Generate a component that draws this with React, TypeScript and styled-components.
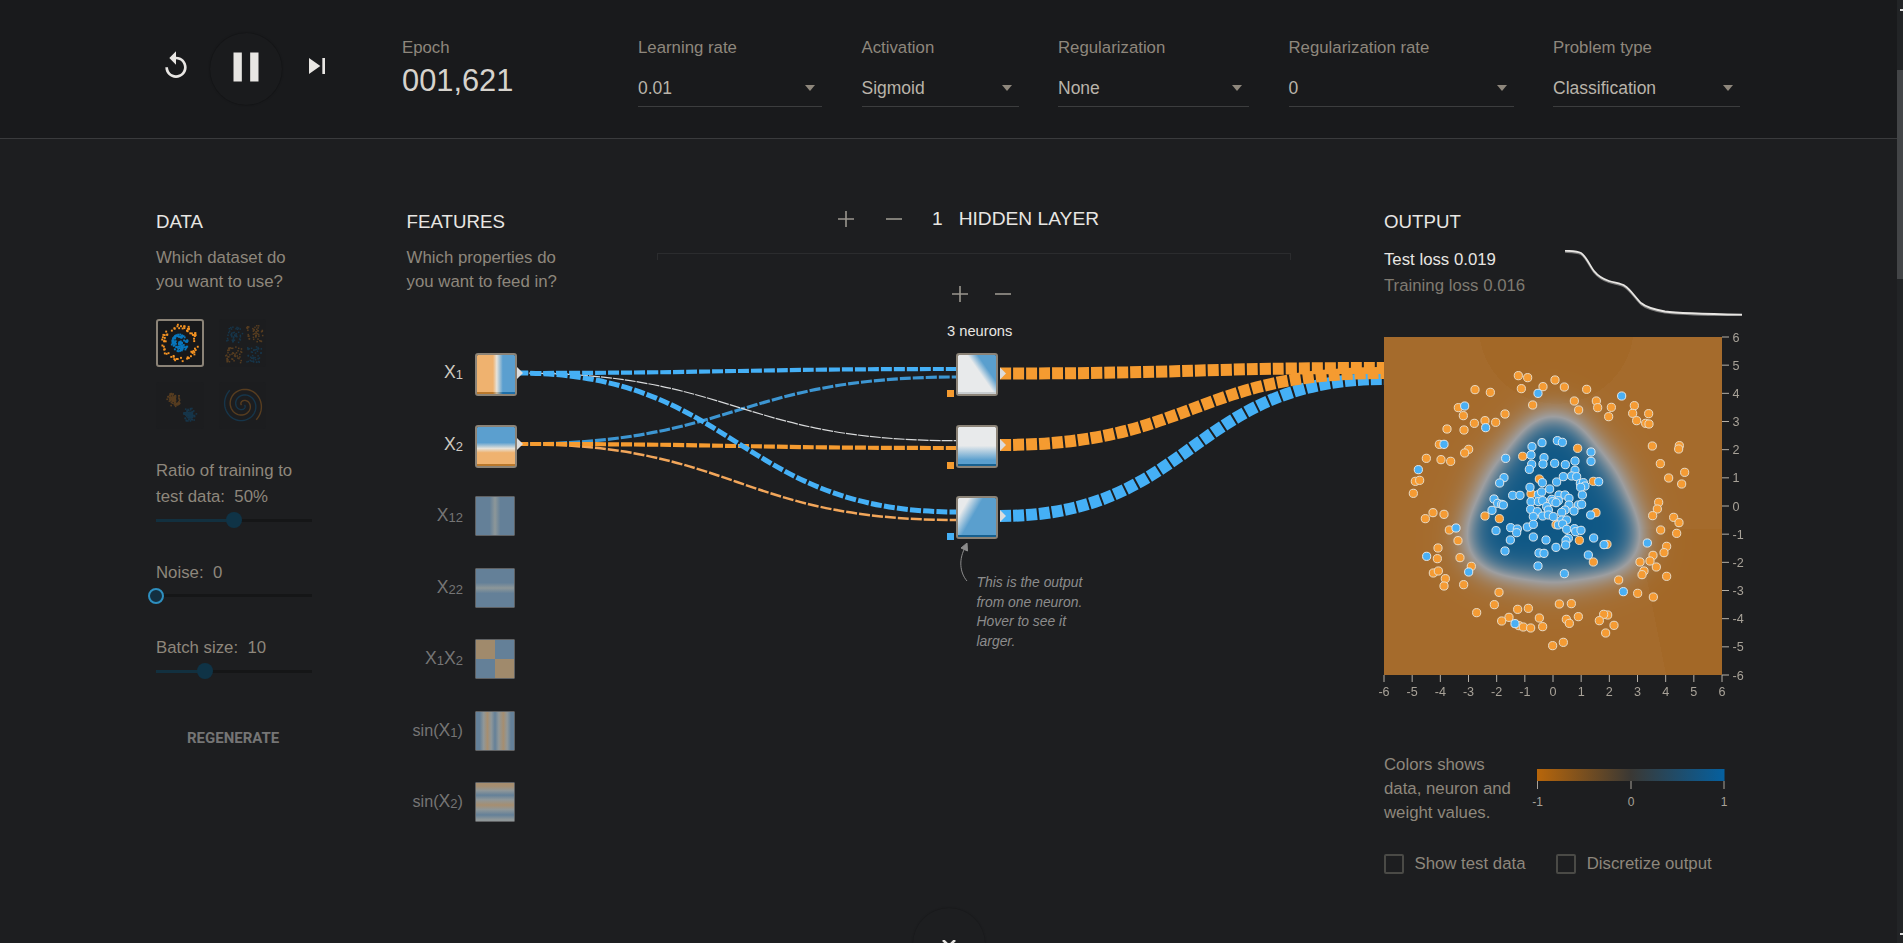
import { useEffect, useRef } from "react";
import styled, { createGlobalStyle } from "styled-components";

const GlobalStyle = createGlobalStyle`
  html, body {
    margin: 0;
    padding: 0;
    background: #fff;
    overflow: hidden;
  }
  body {
    font-family: "Liberation Sans", Arial, sans-serif;
  }
`;

const Shell = styled.div`
  display: flex;
  height: 943px;
  overflow: hidden;
  background: #1d1e20;
`;

const Content = styled.div`
  flex: 1;
  position: relative;
  overflow: hidden;
`;

const Scrollbar = styled.div`
  width: 6px;
  background: #222426;
  position: relative;
  &::before,
  &::after {
    content: "";
    position: absolute;
    right: 0;
    width: 3px;
    height: 2px;
    background: #ddd;
  }
  &::before {
    top: 9px;
  }
  &::after {
    top: 933px;
  }
`;

const ScrollThumb = styled.div`
  margin-top: 70px;
  height: 209px;
  background: #434547;
`;

const TopBar = styled.header`
  display: flex;
  height: 138px;
  padding-left: 160px;
  background: #191a1c;
  border-bottom: 1px solid #3a3b3d;
`;

const Transport = styled.div`
  display: flex;
  align-items: center;
  height: 72px;
  margin-top: 33px;
`;

const IconButton = styled.button`
  display: flex;
  padding: 0;
  border: 0;
  background: none;
  color: #e8e6e3;
  margin-top: -6px;
`;

const PlayButton = styled.button`
  width: 72px;
  height: 72px;
  margin: 0 19px 0 18px;
  padding: 0;
  display: flex;
  align-items: center;
  justify-content: center;
  border-radius: 50%;
  border: 0;
  background: #1a1b1d;
  box-shadow: 0 0 2px rgba(0, 0, 0, 0.5);
  color: #e8e6e3;
  svg {
    margin-top: -5px;
  }
`;

const EpochBlock = styled.div`
  width: 236px;
  margin-left: 69px;
  padding-top: 38px;
`;

const ControlLabel = styled.div`
  font-size: 16.8px;
  line-height: 20px;
  color: #8e877c;
`;

const EpochValue = styled.div`
  margin-top: 5.5px;
  font-size: 30.8px;
  line-height: 34px;
  color: #d6d3cd;
`;

const Controls = styled.div`
  display: flex;
  gap: 39.5px;
  padding-top: 38px;
`;

const Field = styled.div<{ $width: number }>`
  width: ${(p) => p.$width}px;
`;

const Select = styled.div`
  position: relative;
  margin-top: 13px;
  height: 35px;
  line-height: 34px;
  font-size: 17.5px;
  color: #b9b4aa;
  border-bottom: 1px solid #3c3d3e;
  &::after {
    content: "";
    position: absolute;
    right: 7px;
    top: 14px;
    border-left: 5px solid transparent;
    border-right: 5px solid transparent;
    border-top: 6px solid #8e877c;
  }
`;

const Main = styled.main`
  position: relative;
  display: flex;
  height: 804px;
  padding-left: 156px;
`;

const LinkLayer = styled.svg`
  position: absolute;
  left: 0;
  top: 0;
  z-index: 0;
`;

const Column = styled.section<{ $width: number; $top?: number; $gap?: number }>`
  position: relative;
  z-index: 1;
  width: ${(p) => p.$width}px;
  margin-left: ${(p) => p.$gap ?? 0}px;
  padding-top: ${(p) => p.$top ?? 71}px;
`;

const Heading = styled.h4`
  margin: 0;
  font-size: 18.7px;
  font-weight: 400;
  line-height: 24px;
  color: #e8e6e3;
`;

const Lead = styled.p`
  margin: 12px 0 0;
  font-size: 16.8px;
  line-height: 24px;
  color: #8e877c;
`;

const DatasetGrid = styled.div`
  display: grid;
  grid-template-columns: 47.6px 47.6px;
  grid-auto-rows: 47.6px;
  gap: 15px;
  margin-top: 25px;
`;

const Dataset = styled.div<{ $active?: boolean }>`
  box-sizing: border-box;
  border-radius: 3px;
  border: 2px solid ${(p) => (p.$active ? "#8b8377" : "transparent")};
  background: ${(p) => (p.$active ? "#17181a" : "#1c1d1f")};
  svg {
    display: block;
    opacity: ${(p) => (p.$active ? 1 : 0.27)};
  }
`;

const SliderLabel = styled.div<{ $top: number }>`
  margin-top: ${(p) => p.$top}px;
  font-size: 16.8px;
  line-height: 25.7px;
  color: #8e877c;
`;

const SliderTrack = styled.div`
  position: relative;
  width: 156px;
  height: 3px;
  margin: 9px 0;
  background: #151617;
`;

const SliderFill = styled.div<{ $pct: number }>`
  width: ${(p) => p.$pct}%;
  height: 100%;
  background: #12303f;
`;

const SliderThumb = styled.div<{ $pct: number; $empty?: boolean }>`
  position: absolute;
  left: ${(p) => p.$pct}%;
  top: 50%;
  box-sizing: border-box;
  width: 16px;
  height: 16px;
  margin: -8px 0 0 -8px;
  border-radius: 50%;
  background: ${(p) => (p.$empty ? "#132f40" : "#0f3346")};
  border: ${(p) => (p.$empty ? "2px solid #2e8fbf" : "0")};
`;

const Regenerate = styled.div`
  margin: 55px 0 0 31px;
  font-family: Roboto, "Liberation Sans", sans-serif;
  font-weight: 700;
  font-size: 15px;
  line-height: 20px;
  color: #757575;
`;

const FeatureList = styled.div`
  margin-top: 59px;
`;

const FeatureRow = styled.div`
  display: flex;
  height: 71.5px;
  align-items: flex-start;
`;

const FeatureLabel = styled.div<{ $active?: boolean }>`
  width: 56.4px;
  margin-right: 12px;
  height: 40px;
  line-height: 38px;
  text-align: right;
  white-space: nowrap;
  font-size: 16.2px;
  color: ${(p) => (p.$active ? "#cfcac2" : "#757575")};
  b {
    font-weight: 400;
    font-size: 17.6px;
  }
  i {
    font-style: normal;
    font-size: 13px;
    position: relative;
    top: 1px;
  }
`;

const FeatureNode = styled.div<{ $bg: string; $active?: boolean }>`
  position: relative;
  box-sizing: border-box;
  width: ${(p) => (p.$active ? 42 : 40)}px;
  height: ${(p) => (p.$active ? 43 : 40)}px;
  border-radius: ${(p) => (p.$active ? 3 : 1)}px;
  border: ${(p) => (p.$active ? "2px solid #8b8377" : "1px solid #5f6163")};
  background: ${(p) => p.$bg};
  background-clip: padding-box;
`;

const EdgeStripe = styled.div<{ $bg: string }>`
  position: absolute;
  left: 0;
  right: 0;
  bottom: 0;
  height: 2px;
  background: ${(p) => p.$bg};
`;

const LayerHeader = styled.div`
  display: flex;
  align-items: center;
  gap: 32px;
  height: 36px;
  padding-left: 181px;
  font-size: 19.2px;
  color: #e8e6e3;
`;

const RoundButton = styled.button`
  display: flex;
  padding: 0;
  border: 0;
  background: none;
  color: #9a968e;
`;

const LayerTitle = styled.span`
  margin-left: -2px;
  white-space: pre;
`;

const Bracket = styled.div`
  height: 6px;
  margin-top: 16px;
  border: 1px solid #2b2c2e;
  border-bottom: 0;
`;

const NeuronControls = styled.div`
  display: flex;
  gap: 27px;
  height: 26px;
  align-items: center;
  margin-top: 21px;
  padding-left: 295px;
`;

const NeuronCount = styled.div`
  margin-top: 13px;
  padding-left: 290px;
  font-size: 14.7px;
  line-height: 22px;
  color: #e8e6e3;
`;

const NeuronList = styled.div`
  display: flex;
  flex-direction: column;
  margin-top: 11px;
  padding-left: 299.5px;
`;

const Neuron = styled.div<{ $bg: string }>`
  position: relative;
  box-sizing: border-box;
  width: 42px;
  height: 43px;
  margin-bottom: 28.5px;
  border-radius: 3px;
  border: 2px solid #8b8377;
  background: ${(p) => p.$bg};
  background-clip: padding-box;
`;

const Bias = styled.div<{ $color: string }>`
  position: absolute;
  left: -11.5px;
  top: 35px;
  width: 7px;
  height: 7px;
  background: ${(p) => p.$color};
`;

const Note = styled.div`
  position: relative;
  margin: 5.5px 0 0 20px;
  width: 110px;
  font-size: 13.9px;
  font-style: italic;
  line-height: 19.6px;
  color: #8c8c8c;
  svg {
    position: absolute;
    left: -19px;
    top: -30px;
  }
`;

const Metrics = styled.div`
  display: flex;
  justify-content: space-between;
  margin-top: 13px;
  height: 70px;
  svg {
    margin-top: 3px;
  }
`;

const LossText = styled.div<{ $active?: boolean }>`
  font-size: 16.8px;
  line-height: 26px;
  color: ${(p) => (p.$active ? "#e8e6e3" : "#7f7a71")};
`;

const Heat = styled.div`
  position: relative;
  width: 338px;
  height: 338px;
  margin-top: 20px;
  canvas {
    display: block;
  }
  svg {
    position: absolute;
    left: 0;
    top: 0;
    overflow: visible;
  }
`;

const Legend = styled.div`
  display: flex;
  margin-top: 78px;
`;

const LegendText = styled.div`
  width: 152.7px;
  font-size: 16.8px;
  line-height: 24px;
  color: #8e877c;
`;

const LegendScale = styled.svg`
  margin-top: 16px;
  overflow: visible;
`;

const Options = styled.div`
  display: flex;
  margin-top: 29px;
`;

const Option = styled.label<{ $width: number }>`
  display: flex;
  align-items: center;
  gap: 10.5px;
  width: ${(p) => p.$width}px;
  font-size: 16.8px;
  line-height: 20px;
  color: #8e877c;
`;

const Checkbox = styled.span`
  box-sizing: border-box;
  width: 20px;
  height: 20px;
  border: 2px solid #4a4a46;
  border-radius: 2px;
`;

const ScrollHint = styled.div`
  position: absolute;
  left: 913px;
  top: 908px;
  width: 72px;
  height: 72px;
  border-radius: 50%;
  background: #1d1e20;
  box-shadow: 0 0 2px rgba(0, 0, 0, 0.35);
  z-index: 2;
  color: #e8e6e3;
  display: flex;
  justify-content: center;
  padding-top: 32px;
  box-sizing: border-box;
`;

const BLUE = "#45b0f6";
const ORANGE = "#f59b30";

const curve = (x0: number, y0: number, x1: number, y1: number) => {
  const xm = (x0 + x1) / 2;
  return `M${x0},${y0} C${xm},${y0} ${xm},${y1} ${x1},${y1}`;
};

const LINKS = [
  { d: curve(1000, 516, 1384, 379), color: BLUE, width: 12, dash: "11,2" },
  { d: curve(1000, 445, 1384, 373), color: ORANGE, width: 12, dash: "11,2" },
  { d: curve(1000, 373.5, 1384, 368), color: ORANGE, width: 12, dash: "11,2" },
  { d: curve(517, 444, 957, 520), color: "#f2a65a", width: 2.5, dash: "11,2" },
  { d: curve(517, 444, 957, 377), color: "#3d96d2", width: 3.2, dash: "11,2" },
  { d: curve(517, 373, 957, 440.7), color: "#d8dadb", width: 1.2, dash: "11,1" },
  { d: curve(517, 444, 957, 448), color: ORANGE, width: 4.2, dash: "11,2" },
  { d: curve(517, 373, 957, 369), color: BLUE, width: 4.2, dash: "11,2" },
  { d: curve(517, 373, 957, 512), color: BLUE, width: 5, dash: "11,2.2" },
];

const ARROWS = [
  [517, 373],
  [517, 444],
  [1000, 373.5],
  [1000, 445],
  [1000, 516],
];

const FEATURES = [
  {
    key: "x1",
    label: (
      <>
        <b>X</b>
        <i>1</i>
      </>
    ),
    active: true,
    bg: "linear-gradient(90deg, #efb26f 42%, #e6e2da 52%, #5b9fcf 68%)",
    edge: "linear-gradient(90deg, #b9782c 42%, #c9b9a0 52%, #1d6ea8 68%)",
  },
  {
    key: "x2",
    label: (
      <>
        <b>X</b>
        <i>2</i>
      </>
    ),
    active: true,
    bg: "linear-gradient(180deg, #5b9fcf 40%, #e6e2da 55%, #efb26f 66%)",
    edge: "#b9782c",
  },
  {
    key: "x12",
    label: (
      <>
        <b>X</b>
        <i>12</i>
      </>
    ),
    bg: "linear-gradient(90deg, #648098 36%, #8d9799 50%, #648098 64%)",
  },
  {
    key: "x22",
    label: (
      <>
        <b>X</b>
        <i>22</i>
      </>
    ),
    bg: "linear-gradient(180deg, #648098 36%, #8d9799 50%, #648098 64%)",
  },
  {
    key: "x1x2",
    label: (
      <>
        <b>X</b>
        <i>1</i>
        <b>X</b>
        <i>2</i>
      </>
    ),
    bg: "conic-gradient(#648098 0 25%, #a08a6c 25% 50%, #648098 50% 75%, #a08a6c 75%)",
  },
  {
    key: "sinx1",
    label: (
      <>
        sin(<b>X</b>
        <i>1</i>)
      </>
    ),
    bg: "linear-gradient(90deg, #648098 10%, #8f9799 20%, #a68e70 30%, #8f9799 40%, #648098 50%, #8f9799 60%, #a68e70 72%, #8f9799 82%, #648098 92%)",
  },
  {
    key: "sinx2",
    label: (
      <>
        sin(<b>X</b>
        <i>2</i>)
      </>
    ),
    bg: "linear-gradient(180deg, #a68e70 8%, #8f9799 20%, #648098 32%, #8f9799 44%, #a68e70 58%, #8f9799 70%, #648098 84%, #8f9799 96%)",
  },
];

const NEURONS = [
  { bg: "linear-gradient(55deg, #e8eaeb 56%, #5a9fce 72%)", bias: ORANGE, edge: "#c8cdd0" },
  { bg: "linear-gradient(180deg, #e8eaeb 48%, #5a9fce 85%)", bias: ORANGE, edge: "#17608f" },
  { bg: "linear-gradient(120deg, #e8eaeb 18%, #5a9fce 42%)", bias: BLUE, edge: "#17608f" },
];

// dot positions read off the plot, top half and bottom half
const ORANGE_TOP = [
  [445, 527], [473, 533], [555, 540], [519, 560], [583, 561], [454, 566], [650, 568], [315, 569], [361, 577],
  [613, 603], [679, 603], [488, 615], [683, 623], [724, 622], [793, 617], [265, 623], [626, 630], [280, 647],
  [405, 642], [788, 640], [836, 641], [716, 650], [345, 662], [313, 670], [377, 667], [800, 662], [827, 670],
  [837, 672], [231, 687], [282, 690], [847, 738], [928, 737], [926, 747], [208, 733], [296, 748], [284, 759],
  [623, 745], [458, 769], [169, 775], [213, 779], [242, 784], [871, 791],
];
const BLUE_TOP = [
  [284, 618], [504, 580], [755, 588], [347, 683], [222, 733], [562, 722], [577, 727], [516, 728], [486, 740],
  [663, 756], [483, 765], [407, 775], [522, 773], [615, 783], [663, 784], [145, 809], [485, 793], [519, 792],
  [554, 790], [586, 794], [478, 808], [615, 811],
];
const ORANGE_BOTTOM = [
  [944, 67], [896, 84], [136, 94], [149, 91], [935, 102], [130, 130], [508, 87], [670, 94], [483, 131], [866, 157],
  [862, 177], [189, 188], [222, 193], [678, 188], [848, 197], [166, 206], [345, 198], [388, 206], [911, 202],
  [927, 218], [558, 224], [238, 240], [872, 240], [920, 250], [264, 272], [628, 271], [711, 283], [890, 289],
  [204, 294], [882, 308], [849, 316], [202, 326], [270, 323], [840, 333], [810, 336], [670, 336], [304, 349],
  [859, 351], [190, 369], [205, 363], [822, 363], [816, 374], [890, 379], [226, 386], [746, 390], [222, 408],
  [281, 404], [803, 430], [850, 441], [387, 427], [568, 462], [604, 461], [373, 464], [475, 475], [443, 478],
  [320, 488], [713, 495], [701, 493], [625, 500], [508, 504], [417, 502], [589, 508], [688, 512], [395, 513],
  [598, 520], [732, 526], [447, 527], [460, 531], [482, 534], [518, 530], [707, 549], [580, 577], [548, 587],
];
const BLUE_BOTTOM = [
  [402, 83], [389, 99], [517, 98], [560, 96], [580, 80], [605, 78], [620, 80], [631, 100], [640, 98], [686, 95],
  [645, 108], [632, 112], [480, 112], [539, 117], [637, 135], [428, 136], [450, 136], [505, 134], [515, 126],
  [372, 147], [383, 160], [395, 163], [400, 165], [483, 155], [505, 155], [518, 152], [545, 148], [567, 135],
  [585, 135], [597, 145], [548, 155], [565, 152], [558, 158], [597, 165], [625, 165], [635, 163], [366, 181],
  [482, 178], [502, 185], [530, 170], [535, 180], [585, 180], [612, 183], [575, 187], [662, 195], [490, 200],
  [518, 198], [535, 195], [550, 200], [575, 210], [590, 210], [472, 231], [490, 223], [422, 233], [442, 237],
  [440, 248], [378, 242], [565, 225], [578, 222], [590, 238], [613, 236], [617, 245], [633, 241], [490, 261],
  [421, 270], [528, 270], [595, 265], [588, 272], [587, 285], [671, 264], [405, 303], [558, 292], [507, 309],
  [522, 310], [702, 284], [655, 315], [832, 279], [258, 234], [170, 319], [296, 366], [504, 348], [583, 371],
  [760, 425], [435, 521],
];

const toPlot = (list: number[][], dy: number) => list.map(([x, y]) => [x / 3 - 14, y / 3 + dy]);
const ORANGE_DOTS = [...toPlot(ORANGE_TOP, -137), ...toPlot(ORANGE_BOTTOM, 113)];
const BLUE_DOTS = [...toPlot(BLUE_TOP, -137), ...toPlot(BLUE_BOTTOM, 113)];

const TICKS = [-6, -5, -4, -3, -2, -1, 0, 1, 2, 3, 4, 5, 6];
const STEP = 338 / 12;

// rounded triangle: radius of the white band around the origin, in data units
const ringRadius = (a: number) =>
  2.88 + 0.35 * Math.cos(3 * (a - Math.PI / 2)) + 0.06 * Math.cos(6 * (a - Math.PI / 2)) - 0.1 * Math.sin(a);

const heatValue = (x: number, y: number) => {
  const d = ringRadius(Math.atan2(y, x)) - Math.hypot(x, y);
  return Math.tanh(1.6 * d);
};

const mix = (a: number[], b: number[], t: number) => a.map((v, i) => v + (b[i] - v) * t);

function HeatCanvas() {
  const ref = useRef<HTMLCanvasElement>(null);
  useEffect(() => {
    const ctx = ref.current?.getContext("2d");
    if (!ctx) return;
    const image = ctx.createImageData(338, 338);
    const white = [157, 158, 160];
    const blue = [14, 87, 133];
    for (let py = 0; py < 338; py++) {
      for (let px = 0; px < 338; px++) {
        const x = px / STEP - 6;
        const y = 6 - py / STEP;
        const v = heatValue(x, y);
        // the far field is not flat in the reference, a few darker wedges
        const dark = Math.hypot(x - 0.1, y - 6.4) < 2.75 || (x > 3 && y < -0.8 && x - 3 > (y + 1) * -0.2);
        const orange = dark ? [163, 104, 39] : [165, 107, 44];
        const c = v < 0 ? mix(white, orange, -v) : mix(white, blue, v);
        const i = (py * 338 + px) * 4;
        image.data[i] = c[0];
        image.data[i + 1] = c[1];
        image.data[i + 2] = c[2];
        image.data[i + 3] = 255;
      }
    }
    ctx.putImageData(image, 0, 0);
  }, []);
  return <canvas ref={ref} width={338} height={338} />;
}

const seeded = (seed: number) => () => {
  seed = (seed + 0x6d2b79f5) | 0;
  let t = Math.imul(seed ^ (seed >>> 15), 1 | seed);
  t = (t + Math.imul(t ^ (t >>> 7), 61 | t)) ^ t;
  return ((t ^ (t >>> 14)) >>> 0) / 4294967296;
};

type Dot = { x: number; y: number; c: string };
const THUMB_BLUE = "#0877bd";
const THUMB_ORANGE = "#f59322";

const circleDots = (): Dot[] => {
  const r = seeded(7);
  const out: Dot[] = [];
  for (let i = 0; i < 85; i++) {
    const a = r() * Math.PI * 2;
    const rad = Math.sqrt(r()) * 8.5;
    out.push({ x: 21 + Math.cos(a) * rad, y: 21 + Math.sin(a) * rad, c: THUMB_BLUE });
  }
  for (let i = 0; i < 70; i++) {
    const a = r() * Math.PI * 2;
    const rad = 14 + r() * 4.5;
    out.push({ x: 21 + Math.cos(a) * rad, y: 21 + Math.sin(a) * rad, c: THUMB_ORANGE });
  }
  return out;
};

const xorDots = (): Dot[] => {
  const r = seeded(11);
  const out: Dot[] = [];
  const quadrants: [number, number, string][] = [
    [5, 5, THUMB_BLUE],
    [25, 4, THUMB_ORANGE],
    [4, 25, THUMB_ORANGE],
    [25, 25, THUMB_BLUE],
  ];
  quadrants.forEach(([ox, oy, c]) => {
    for (let i = 0; i < 45; i++) {
      out.push({ x: ox + r() * 16, y: oy + r() * 16, c });
    }
  });
  return out;
};

const gaussDots = (): Dot[] => {
  const r = seeded(23);
  const out: Dot[] = [];
  const blob = (cx: number, cy: number, c: string) => {
    for (let i = 0; i < 90; i++) {
      const a = r() * Math.PI * 2;
      const rad = r() * 7;
      out.push({ x: cx + Math.cos(a) * rad, y: cy + Math.sin(a) * rad, c });
    }
  };
  blob(15, 15, THUMB_ORANGE);
  blob(31, 30, THUMB_BLUE);
  return out;
};

const spiralPath = (turn: number) => {
  const pts: string[] = [];
  for (let t = 0; t <= 1; t += 0.01) {
    const a = t * Math.PI * 3.3 + turn;
    const rad = 1.5 + t * 18.5;
    pts.push(`${(22 + Math.cos(a) * rad).toFixed(2)},${(21 + Math.sin(a) * rad).toFixed(2)}`);
  }
  return `M${pts.join(" L")}`;
};

function DotThumb({ dots, size, dot }: { dots: Dot[]; size: number; dot: number }) {
  return (
    <svg width={size} height={size} viewBox={`0 0 ${size} ${size}`}>
      {dots.map((d, i) => (
        <rect key={i} x={d.x} y={d.y} width={dot} height={dot} fill={d.c} />
      ))}
    </svg>
  );
}

function Slider({ pct, empty }: { pct: number; empty?: boolean }) {
  return (
    <SliderTrack>
      <SliderFill $pct={pct} />
      <SliderThumb $pct={pct} $empty={empty} />
    </SliderTrack>
  );
}

function PlusIcon() {
  return (
    <svg width="16" height="16" viewBox="0 0 16 16">
      <path d="M8 0v16M0 8h16" stroke="currentColor" strokeWidth="1.6" fill="none" />
    </svg>
  );
}

function MinusIcon() {
  return (
    <svg width="16" height="16" viewBox="0 0 16 16">
      <path d="M0 8h16" stroke="currentColor" strokeWidth="1.6" fill="none" />
    </svg>
  );
}

const LOSS_LINE =
  "M0,.7 C6,1 12,1 16,3 C21,6 25,16 29,21 C33,26 38,29 44,31 C50,33 56,33 60,36 C65,39 70,47 76,53 C82,58 92,60 100,61.5 C115,63.5 140,64 177,64.7";

export default function App() {
  return (
    <Shell>
      <GlobalStyle />
      <Content>
        <TopBar>
          <Transport>
            <IconButton>
              <svg width="32" height="32" viewBox="0 0 24 24" fill="currentColor">
                <path d="M12 5V1L7 6l5 5V7c3.31 0 6 2.69 6 6s-2.69 6-6 6-6-2.69-6-6H4c0 4.42 3.58 8 8 8s8-3.58 8-8-3.58-8-8-8z" />
              </svg>
            </IconButton>
            <PlayButton>
              <svg width="50" height="50" viewBox="0 0 24 24" fill="currentColor">
                <path d="M6 19h4V5H6v14zm8-14v14h4V5h-4z" />
              </svg>
            </PlayButton>
            <IconButton>
              <svg width="32" height="32" viewBox="0 0 24 24" fill="currentColor">
                <path d="M6 18l8.5-6L6 6v12zM16 6v12h2V6h-2z" />
              </svg>
            </IconButton>
          </Transport>
          <EpochBlock>
            <ControlLabel>Epoch</ControlLabel>
            <EpochValue>001,621</EpochValue>
          </EpochBlock>
          <Controls>
            <Field $width={184}>
              <ControlLabel>Learning rate</ControlLabel>
              <Select>0.01</Select>
            </Field>
            <Field $width={157}>
              <ControlLabel>Activation</ControlLabel>
              <Select>Sigmoid</Select>
            </Field>
            <Field $width={191}>
              <ControlLabel>Regularization</ControlLabel>
              <Select>None</Select>
            </Field>
            <Field $width={225}>
              <ControlLabel>Regularization rate</ControlLabel>
              <Select>0</Select>
            </Field>
            <Field $width={187}>
              <ControlLabel>Problem type</ControlLabel>
              <Select>Classification</Select>
            </Field>
          </Controls>
        </TopBar>

        <Main>
          <LinkLayer width="1897" height="804" viewBox="0 139 1897 804">
            {LINKS.map((l, i) => (
              <path key={i} d={l.d} fill="none" stroke={l.color} strokeWidth={l.width} strokeDasharray={l.dash} />
            ))}
            {ARROWS.map(([x, y], i) => (
              <path key={i} d={`M${x},${y - 6} L${x + 6},${y} L${x},${y + 6} Z`} fill="#dcdcdc" />
            ))}
          </LinkLayer>

          <Column $width={250.6}>
            <Heading>DATA</Heading>
            <Lead>
              Which dataset do
              <br />
              you want to use?
            </Lead>
            <DatasetGrid>
              <Dataset $active>
                <DotThumb dots={circleDots()} size={44} dot={1.9} />
              </Dataset>
              <Dataset>
                <DotThumb dots={xorDots()} size={44} dot={1.5} />
              </Dataset>
              <Dataset>
                <DotThumb dots={gaussDots()} size={44} dot={1.6} />
              </Dataset>
              <Dataset>
                <svg width="44" height="44" viewBox="0 0 44 44" fill="none" strokeWidth="1.4">
                  <path d={spiralPath(0)} stroke={THUMB_BLUE} />
                  <path d={spiralPath(Math.PI)} stroke={THUMB_ORANGE} />
                </svg>
              </Dataset>
            </DatasetGrid>
            <SliderLabel $top={29}>
              Ratio of training to
              <br />
              test data:&nbsp; 50%
            </SliderLabel>
            <Slider pct={50} />
            <SliderLabel $top={38}>Noise:&nbsp; 0</SliderLabel>
            <Slider pct={0} empty />
            <SliderLabel $top={37.5}>Batch size:&nbsp; 10</SliderLabel>
            <Slider pct={31.5} />
            <Regenerate>REGENERATE</Regenerate>
          </Column>

          <Column $width={250.4}>
            <Heading>FEATURES</Heading>
            <Lead>
              Which properties do
              <br />
              you want to feed in?
            </Lead>
            <FeatureList>
              {FEATURES.map((f) => (
                <FeatureRow key={f.key}>
                  <FeatureLabel $active={f.active}>{f.label}</FeatureLabel>
                  <FeatureNode $bg={f.bg} $active={f.active}>
                    {f.edge && <EdgeStripe $bg={f.edge} />}
                  </FeatureNode>
                </FeatureRow>
              ))}
            </FeatureList>
          </Column>

          <Column $width={634} $top={62}>
            <LayerHeader>
              <RoundButton>
                <PlusIcon />
              </RoundButton>
              <RoundButton>
                <MinusIcon />
              </RoundButton>
              <LayerTitle>1{"   "}HIDDEN LAYER</LayerTitle>
            </LayerHeader>
            <Bracket />
            <NeuronControls>
              <RoundButton>
                <PlusIcon />
              </RoundButton>
              <RoundButton>
                <MinusIcon />
              </RoundButton>
            </NeuronControls>
            <NeuronCount>3 neurons</NeuronCount>
            <NeuronList>
              {NEURONS.map((n, i) => (
                <Neuron key={i} $bg={n.bg}>
                  <EdgeStripe $bg={n.edge} />
                  <Bias $color={n.bias} />
                </Neuron>
              ))}
              <Note>
                <svg width="20" height="40" viewBox="0 0 20 40" fill="none" stroke="#8c8c8c" strokeWidth="1">
                  <path d="M10,38 C3,30 1,16 9,3" />
                  <path d="M4,5 L10,0 L10.5,8 Z" fill="#8c8c8c" />
                </svg>
                This is the output from one neuron. Hover to see it larger.
              </Note>
            </NeuronList>
          </Column>

          <Column $width={358} $gap={93}>
            <Heading>OUTPUT</Heading>
            <Metrics>
              <div>
                <LossText $active>Test loss 0.019</LossText>
                <LossText>Training loss 0.016</LossText>
              </div>
              <svg width="177" height="66" viewBox="0 0 177 66" fill="none">
                <path d={LOSS_LINE} transform="translate(0,1.2)" stroke="#777" strokeWidth="1.8" />
                <path d={LOSS_LINE} stroke="#e8e6e3" strokeWidth="1.8" />
              </svg>
            </Metrics>
            <Heat>
              <HeatCanvas />
              <svg width="338" height="338" viewBox="0 0 338 338">
                {ORANGE_DOTS.map(([x, y], i) => (
                  <circle key={i} cx={x} cy={y} r={4.1} fill="#f59b33" stroke="#e8dcc8" strokeWidth="1" />
                ))}
                {BLUE_DOTS.map(([x, y], i) => (
                  <circle key={i} cx={x} cy={y} r={4.1} fill="#4ab0f5" stroke="#e3e8ea" strokeWidth="1" />
                ))}
                <g stroke="#b5afa6" strokeWidth="1">
                  {TICKS.map((t) => (
                    <path key={t} d={`M338,${(6 - t) * STEP} h7 M${(t + 6) * STEP},338 v7`} />
                  ))}
                </g>
                <g fill="#a8a298" fontSize="12.6" fontFamily="Liberation Sans, sans-serif">
                  {TICKS.map((t) => (
                    <text key={t} x={348.5} y={(6 - t) * STEP + 4.5}>
                      {t}
                    </text>
                  ))}
                  {TICKS.map((t) => (
                    <text key={t} x={(t + 6) * STEP} y={359} textAnchor="middle">
                      {t}
                    </text>
                  ))}
                </g>
              </svg>
            </Heat>
            <Legend>
              <LegendText>
                Colors shows
                <br />
                data, neuron and
                <br />
                weight values.
              </LegendText>
              <LegendScale width="188" height="40" viewBox="0 0 188 40">
                <defs>
                  <linearGradient id="legend-colors">
                    <stop offset="0" stopColor="#b8660a" />
                    <stop offset="0.5" stopColor="#3a3834" />
                    <stop offset="1" stopColor="#05609f" />
                  </linearGradient>
                </defs>
                <rect x="0" y="0" width="187.5" height="12" fill="url(#legend-colors)" />
                <path d="M.5,12v8 M94,12v8 M187,12v8" stroke="#a8a298" />
                <g fill="#a8a298" fontSize="12" fontFamily="Liberation Sans, sans-serif" textAnchor="middle">
                  <text x="0.5" y="37">
                    -1
                  </text>
                  <text x="94" y="37">
                    0
                  </text>
                  <text x="187" y="37">
                    1
                  </text>
                </g>
              </LegendScale>
            </Legend>
            <Options>
              <Option $width={172.4}>
                <Checkbox />
                Show test data
              </Option>
              <Option $width={186}>
                <Checkbox />
                Discretize output
              </Option>
            </Options>
          </Column>
        </Main>

        <ScrollHint>
          <svg width="14" height="8" viewBox="0 0 14 8">
            <path d="M1,0 L7,6 L13,0" fill="none" stroke="currentColor" strokeWidth="2.6" />
          </svg>
        </ScrollHint>
      </Content>
      <Scrollbar>
        <ScrollThumb />
      </Scrollbar>
    </Shell>
  );
}
